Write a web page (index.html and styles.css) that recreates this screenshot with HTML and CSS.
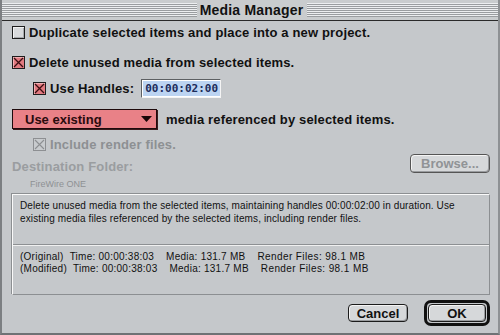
FILE: index.html
```html
<!DOCTYPE html>
<html lang="en">
<head>
    <meta charset="UTF-8">
    <title>Media Manager</title>
    <link rel="stylesheet" href="styles.css">
</head>
<body>
    <div class="window">
        <!-- Title bar -->
        <div class="titlebar">
            <span class="title">Media Manager</span>
        </div>

        <div class="content">
            <div class="row row-dup">
                <span class="check"></span>
                <span class="label">Duplicate selected items and place into a new project.</span>
            </div>

            <div class="row row-del">
                <span class="check checked">
                    <svg width="11" height="11" viewBox="0 0 11 11"><path d="M1 1L10 10M10 1L1 10" stroke="#3a0d10" stroke-width="1.3"/></svg>
                </span>
                <span class="label">Delete unused media from selected items.</span>
            </div>

            <div class="row row-handles indent">
                <span class="check checked">
                    <svg width="11" height="11" viewBox="0 0 11 11"><path d="M1 1L10 10M10 1L1 10" stroke="#3a0d10" stroke-width="1.3"/></svg>
                </span>
                <span class="label">Use Handles:</span>
                <span class="field"><span class="field-text">00:00:02:00</span></span>
            </div>

            <div class="row row-popup">
                <div class="popup">
                    <span>Use existing</span>
                    <svg width="11" height="6" viewBox="0 0 11 6"><path d="M0 0H11L5.5 6Z" fill="#1a0608"/></svg>
                </div>
                <span class="label">media referenced by selected items.</span>
            </div>

            <div class="row row-render indent disabled">
                <span class="check">
                    <svg width="11" height="11" viewBox="0 0 11 11"><path d="M1 1L10 10M10 1L1 10" stroke="#8d8f92" stroke-width="1.1"/></svg>
                </span>
                <span class="label">Include render files.</span>
            </div>

            <div class="row row-dest">
                <div class="dest">
                    <div class="dest-label">Destination Folder:</div>
                    <div class="dest-name">FireWire ONE</div>
                </div>
                <button class="btn btn-browse" disabled>Browse...</button>
            </div>

            <!-- Summary box -->
            <div class="info">
                <p class="info-desc">Delete unused media from the selected items, maintaining handles 00:00:02:00 in duration. Use existing media files referenced by the selected items, including render files.</p>
                <div class="info-stats">
                    <div class="stat"><span class="s1">(Original)</span><span class="s2">Time: 00:00:38:03</span><span class="s3">Media: 131.7 MB</span><span class="s4">Render Files: 98.1 MB</span></div>
                    <div class="stat"><span class="s1">(Modified)</span><span class="s2">Time: 00:00:38:03</span><span class="s3">Media: 131.7 MB</span><span class="s4">Render Files: 98.1 MB</span></div>
                </div>
            </div>

            <div class="buttons">
                <button class="btn btn-cancel">Cancel</button>
                <span class="ok-ring"><button class="btn btn-ok">OK</button></span>
            </div>
        </div>
    </div>
</body>
</html>
```

FILE: styles.css
```css
/* General */
body {
    margin: 0;
    padding: 0;
    background-color: #c5c8cb;
    font-family: "Liberation Sans", Arial, sans-serif;
    color: #111;
}

.window {
    width: 500px;
    height: 335px;
    box-sizing: border-box;
    background-color: #c5c8cb;
    border-left: 2px solid #7c7f82;
    border-right: 2px solid #8e9194;
    border-bottom: 2px solid #6f7275;
}

/* Title bar */
.titlebar {
    height: 21px;
    box-sizing: border-box;
    border-bottom: 1px solid #2a2a2a;
    display: flex;
    align-items: center;
    justify-content: center;
    background:
        repeating-linear-gradient(to bottom, #eceef0 0, #eceef0 1px, #9a9da0 1px, #9a9da0 2px) 0 3px / 100% 14px no-repeat,
        #c9ccce;
}

.title {
    background-color: #c9ccce;
    padding: 0 4px 0 3px;
    margin-left: 4px;
    font-weight: bold;
    font-size: 14px;
    letter-spacing: 0.2px;
    line-height: 20px;
}

/* Content */
.content {
    padding: 0 8px 0 10px;
}

.row {
    display: flex;
    align-items: center;
    font-weight: bold;
    font-size: 13px;
}

.indent {
    padding-left: 21px;
}

.row-dup {
    margin-top: 5px;
    height: 13px;
}

.row-del {
    margin-top: 17px;
    height: 13px;
}

.row-handles {
    margin-top: 10px;
    height: 19px;
}

.row-popup {
    margin-top: 11px;
    height: 20px;
}

.row-render {
    margin-top: 9px;
    height: 13px;
}

.label {
    margin-left: 4px;
    letter-spacing: 0.15px;
}

/* Checkboxes */
.check {
    width: 13px;
    height: 13px;
    box-sizing: border-box;
    border: 1px solid #1d1d1d;
    background-color: #d8dadc;
    box-shadow: inset 1px 1px 0 #f2f2f2, inset -1px -1px 0 #a8aaad;
    display: flex;
    align-items: center;
    justify-content: center;
}

.check.checked {
    background-color: #e27a80;
    box-shadow: inset 1px 1px 0 #f3b0b4;
}

.disabled .check {
    border-color: #8d8f92;
    background-color: #c8cbce;
    box-shadow: none;
}

.disabled .label {
    color: #8d9093;
}

/* Timecode field */
.field {
    margin-left: 7px;
    width: 80px;
    height: 19px;
    box-sizing: border-box;
    border: 1px solid #5d6063;
    border-right-color: #f4f4f4;
    border-bottom-color: #f4f4f4;
    background-color: #fff;
    display: flex;
    align-items: center;
    padding-left: 1px;
}

.field-text {
    background-color: #bcd4f2;
    color: #1c2c5a;
    font-family: "DejaVu Sans Mono", monospace;
    font-size: 11px;
    font-weight: bold;
    line-height: 15px;
    padding: 0 2px;
}

/* Popup menu */
.popup {
    width: 145px;
    height: 20px;
    box-sizing: border-box;
    border: 1px solid #1e0a0c;
    background-color: #e98187;
    box-shadow: 1px 1px 0 #3a1a1c;
    display: flex;
    align-items: center;
    justify-content: space-between;
    padding: 0 4px 0 12px;
    color: #2a0b0e;
}

.row-popup .label {
    margin-left: 9px;
}

/* Destination */
.row-dest {
    align-items: flex-start;
    justify-content: space-between;
    margin-top: 3px;
    height: 40px;
}

.dest-label {
    color: #9a9da0;
    margin-top: 5px;
    letter-spacing: 0.15px;
}

.dest-name {
    margin-top: 5px;
    margin-left: 18px;
    font-weight: normal;
    font-size: 9px;
    color: #8e9194;
}

.btn {
    font-family: "Liberation Sans", Arial, sans-serif;
    font-weight: bold;
    font-size: 13px;
    background-color: #d6d8da;
    border: 1px solid #1b1b1b;
    border-radius: 4px;
    box-shadow: inset 1px 1px 0 #f4f4f4, inset -1px -1px 0 #9a9c9f;
    color: #111;
    padding: 0;
}

.btn-browse {
    width: 80px;
    height: 19px;
    color: #909396;
    border-color: #555;
}

/* Info box */
.info {
    height: 101px;
    box-sizing: border-box;
    border: 1px solid #8c8f92;
    border-top-color: #fafafa;
    border-left-color: #fafafa;
    box-shadow: -1px -1px 0 #8c8f92;
    font-size: 10px;
    color: #111;
}

.info-desc {
    margin: 0;
    padding: 4px 6px 0 7px;
    line-height: 13px;
    height: 45px;
    letter-spacing: 0.12px;
    border-bottom: 1px solid #8d9093;
    box-shadow: 0 1px 0 #f0f0f0;
}

.info-stats {
    padding: 6px 6px 0 7px;
    line-height: 12px;
}

.stat {
    display: flex;
    white-space: pre;
    letter-spacing: 0.25px;
}

.s1 {
    margin-right: 6px;
}

.s2 {
    margin-right: 12px;
}

.s3 {
    margin-right: 12px;
}

.s4 {
    letter-spacing: 0.4px;
}

/* Bottom buttons */
.buttons {
    display: flex;
    justify-content: flex-end;
    align-items: center;
    margin-top: 5px;
    gap: 16px;
}

.btn-cancel {
    width: 60px;
    height: 18px;
}

.ok-ring {
    display: inline-flex;
    border: 3px solid #111;
    border-radius: 7px;
    padding: 1px;
    background-color: #c5c8cb;
}

.btn-ok {
    width: 58px;
    height: 18px;
}
```
